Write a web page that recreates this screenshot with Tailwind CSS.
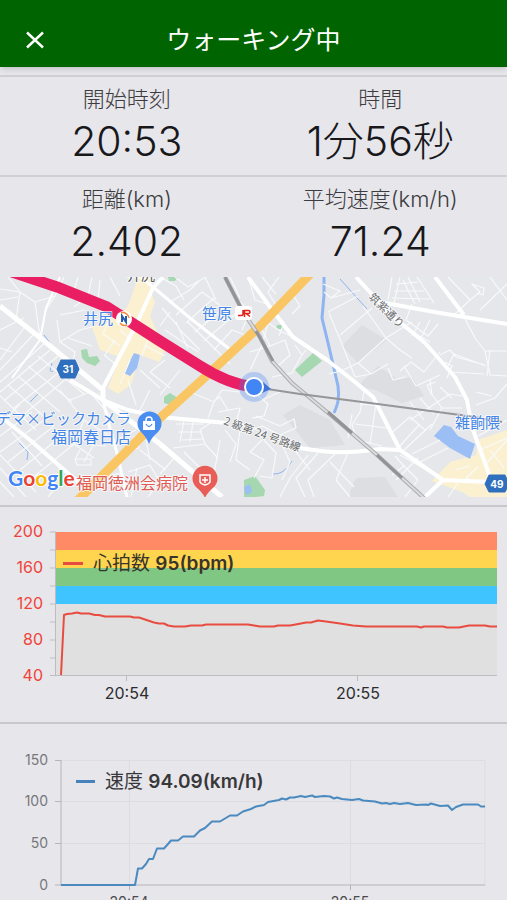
<!DOCTYPE html>
<html lang="ja">
<head>
    <meta charset="UTF-8">
    <meta name="viewport" content="width=device-width, initial-scale=1.0">
    <title>ウォーキング中</title>
    <script src="https://cdn.jsdelivr.net/npm/@tailwindcss/browser@4"></script>
</head>
<body class="bg-[#e7e6eb] text-[#18181b] font-['Inter','Noto_Sans_CJK_JP',sans-serif]">

    <header class="relative grid grid-cols-[70px_1fr_70px] items-center h-[67px] pt-3 bg-[#006500] text-white shadow-md">
        <button type="button" aria-label="閉じる" class="justify-self-center">
            <svg class="w-5 h-5" viewBox="0 0 20 20" fill="none" stroke="currentColor" stroke-width="2.4">
                <path d="M2 2.5L18 17.5M18 2.5L2 17.5" />
            </svg>
        </button>
        <h1 class="text-center text-[25px] leading-8">ウォーキング中</h1>
    </header>

    <main>
        <!-- Stats -->
        <dl class="grid grid-cols-2 mt-2 text-center">
            <div class="h-25 pt-1 border-t-2 border-[#d0cfd4]">
                <dt class="text-[22px] leading-9 text-[#3c3c40] font-light">開始時刻</dt>
                <dd class="text-[41px] leading-12 font-light">20:53</dd>
            </div>
            <div class="h-25 pt-1 border-t-2 border-[#d0cfd4]">
                <dt class="text-[22px] leading-9 text-[#3c3c40] font-light">時間</dt>
                <dd class="text-[41px] leading-12 font-light">1分56秒</dd>
            </div>
            <div class="h-[102px] pt-1 border-t-2 border-[#d0cfd4]">
                <dt class="text-[22px] leading-9 text-[#3c3c40] font-light">距離(km)</dt>
                <dd class="text-[41px] leading-12 font-light">2.402</dd>
            </div>
            <div class="h-[102px] pt-1 border-t-2 border-[#d0cfd4]">
                <dt class="text-[22px] leading-9 text-[#3c3c40] font-light">平均速度(km/h)</dt>
                <dd class="text-[41px] leading-12 font-light">71.24</dd>
            </div>
        </dl>

        <!-- Map -->
        <svg class="block w-full h-[220px]" viewBox="0 277 507 220" preserveAspectRatio="xMidYMid slice" role="img" aria-label="地図">
            <rect x="0" y="277" width="507" height="220" fill="#e5e7ea" />
            <g fill="#dcdee2">
                <path d="M342 346L362 325L387 340L358 363ZM358 386L378 366L397 379L412 377L424 396L402 403L375 390ZM283 415L300 405L330 420L345 445L310 448ZM350 492L356 478L385 477L398 497H350Z" />
            </g>
            <g fill="#fbf1d0">
                <path d="M138 277H153L150 290L155 302L150 316L165 350L160 362L140 355L131 385L118 394L108 388L120 357L100 350L92 327L118 316L128 306Z" />
                <path d="M507 430L478 440L476 455L450 462L432 481L462 492L470 497H507Z" />
                <path d="M110 382H122V389H110Z" />
            </g>
            <g fill="#a5d7b1">
                <path d="M295 370L313 353L322 361L302 377Z" />
                <path d="M81 350L87 349L89 357L97 356L100 361L95 366L87 363L82 358Z" />
                <path d="M168 277H178L175 281H169Z" />
                <path d="M164 397L170 393L178 398L171 405L164 403Z" />
                <path d="M244 480L255 476L265 490L264 496L256 497H244Z" />
                <path d="M277 325L283 325L283 329L276 329Z" />
            </g>
            <g fill="#9bbef5">
                <path d="M134 353L140 355L137 368L130 376L124 373Z" />
                <path d="M434 436L444 425L451 427L458 436L475 444L470 459L450 448Z" />
                <path d="M244 487L250 484L252 492L246 495Z" />
            </g>
            <g fill="none" stroke="#8fb4f2">
                <path d="M324 277V295L322 318L329 347L338 386C340 399 337 406 334 413" stroke-width="3" />
                <path d="M340 279L367 309M44 335L56 351M52 363Q48 374 53 371M30 402L38 394M19 443L28 452L27 460M273 474Q284 475 292 461" stroke-width="1" />
            </g>

            <!-- Minor streets -->
            <g fill="none" stroke="#f8f9fa" stroke-width="1.2" stroke-linejoin="round">
                <path d="M0 289L20 292L35 302L55 296L64 277M20 292L16 320M35 302L40 338M55 296L46 310L40 338M0 330L24 318M8 277L20 292M0 300L18 297M78 277L74 291M92 277L88 296L74 307M100 280L98 300M110 277L120 296M60 315L85 310M57 320L60 342L80 330L92 327M60 342L75 352L72 365M68 338L92 346" />
                <path d="M0 348L12 352M0 360L24 328M0 370L34 334M0 382L44 344M0 392L50 350M5 400L58 356M14 408L62 370M22 416L72 374M0 396L36 430M8 385L48 420M18 376L60 412M28 366L72 402M38 356L84 394M0 424L20 404M0 436L32 412M0 452L44 420M8 462L54 426M20 470L66 432M30 480L74 444M0 468L26 497M0 482L14 497M12 432L42 466" />
                <path d="M60 390L84 420L74 444L94 458M84 420L110 436M70 400L90 392L112 418M0 455L36 492M40 450L66 470M66 432L94 444L84 462M76 459H91V465H77L75 459L80 450M93 445L106 446M48 497L62 480M104 477L120 473M120 438L136 430M124 452L139 448L134 436M128 472L150 465L160 482M140 450L166 470M146 440L150 460M137 468L131 497M160 481L148 497M176 456L160 474M184 452L200 468M173 448L205 444L218 458M205 444L200 430L215 420M220 440L214 474M225 430L236 444L230 462M240 430L236 460L250 470" />
                <path d="M176 424H204M178 432H202M182 440L203 439M184 420L180 442M193 422L190 442M150 390L140 410M128 380L136 405M140 370L160 388M130 360L120 384M104 355L118 366M115 340L105 355M108 322L103 334L120 346M120 330L131 340M144 345L165 356M150 334L142 356M165 360L150 372L170 388M180 370L160 395M190 392L214 402L208 418M214 402L222 390L240 392M218 412L240 408L236 424M214 401L220 397L228 410" />
                <path d="M160 277L176 286L184 300M175 277L188 287L206 277M170 302L190 290L200 280M176 315L202 292L220 305M186 323L214 298M195 332L222 310M204 341L238 312M180 330L200 350M188 322L216 350M162 308L178 326M170 312L160 326M214 350L232 330L248 336M224 362L242 342M213 347L230 364M238 300L250 312L242 330M248 277L255 300L270 305M230 277L240 298M205 277L216 300M165 330L198 352M176 322L188 349" />
                <path d="M262 277L276 294M279 277L268 292L276 305L268 323L262 345L250 370M268 323L282 332L293 337M270 346L285 340L290 355L278 366M250 352L270 346L262 330M295 345L302 355L292 373L272 377M302 355L306 350M277 315L284 323L279 336M290 290L300 306L292 314M256 394L268 404L264 416L252 418M262 400L280 392M256 416L280 426L294 419L296 428L280 435L262 426L250 431" />
                <path d="M323 284L340 291L331 298L324 292M331 298L360 290M328 312L358 296M329 313L342 344L355 377M340 335L372 308M363 306L386 338L412 322M386 338L358 363L341 371L329 374M358 363L371 374L388 364M371 374L355 377M388 368L393 380L406 377M400 371L411 362L424 372L440 352M404 366L416 386L440 375M386 338L400 350L412 358M392 277L388 300M400 277L394 303M408 277L420 302M417 277L434 303M396 284L418 282M394 291L424 291M392 298L430 299M403 280L415 304M412 304L406 320L428 336L438 324M406 328L430 342M420 322L412 336M430 320L420 340" />
                <path d="M448 277L470 300L480 292L472 284L484 288L483 295L477 293M470 300L455 314M490 277L507 300M507 284L480 310M463 315L475 338L485 351H507M485 351L490 375L507 376M440 355L450 350L456 357L485 365M448 366L454 354L486 366M450 372L484 374M445 362L452 366L447 378M490 350L487 376" />
                <path d="M364 392L360 412L352 425L357 440L382 446M360 404L380 406M355 424L387 428M352 414L348 438M376 404L370 444M390 434L410 417L425 430M398 448L420 424M404 450L432 424M412 454L440 440M420 462L448 448M410 420L450 394L462 396M430 430L442 408L462 408M420 398L434 414M410 402L424 420M430 392L442 408M440 387L452 398M476 405L495 398L507 384M476 392L492 396M470 420L490 416M478 436L507 420M480 450L507 438" />
                <path d="M430 380L432 395L427 385L436 382M486 464L507 440M490 450L504 468M478 467L466 478L475 482M448 497L458 483M455 470L470 466M395 456L404 466L392 475M404 466L418 480L405 497M400 455L430 472M418 458L396 480M348 453L336 480L350 497M335 454L308 480L314 497M318 453L296 478L305 497M330 462L354 487M296 452L310 470M308 455L290 478L280 497M262 440L250 452L264 460L254 478M264 440L276 453L272 478L260 476M280 440L290 462L282 480" />
            </g>

            <!-- Main roads -->
            <g fill="none" stroke="#fff" stroke-linejoin="round">
                <path d="M0 306L43 340L103 390V400L160 444L222 497" stroke-width="5" />
                <path d="M163 277L153 288L136 325L102 390" stroke-width="4" />
                <path d="M141 277L153 287L190 318L232 351" stroke-width="3" />
                <path d="M70 380L103 400L128 410L160 417L227 423M300 448C335 454 350 453 380 449L400 450L443 480L490 482H507M443 480L425 497" stroke-width="4" />
                <path d="M103 400L109 425L117 453L127 497" stroke-width="3" />
                <path d="M0 416L30 440L78 482" stroke-width="4" />
                <path d="M356 277L390 314L425 343L455 377L467 400L472 427L490 477" stroke-width="4" />
                <path d="M380 302L440 313L507 324M435 277L464 315" stroke-width="4" />
                <path d="M248 277L270 307L293 337L327 360L355 382L373 397L400 450" stroke-width="4" />
                <path d="M60 277L46 308L40 340L12 378" stroke-width="2" />
            </g>
            <path d="M312 272L260 326L203 379L160 418L117 461L76 502" fill="none" stroke="#fac663" stroke-width="9" />

            <!-- Railways -->
            <g fill="none">
                <path d="M225 277L243 312L260 337L272 361L292 383L333 417L377 455L424 498" stroke="#aaabad" stroke-width="4" />
                <path d="M225 277L243 312L260 337L272 361L292 383L333 417L377 455L424 498" stroke="#dcdcde" stroke-width="2" />
                <path d="M225 277L242 310M256 331L273 361M328 412L352 433M377 455L402 478" stroke="#929396" stroke-width="3" />
                <path d="M254 387L300 394L370 403L468 416L502 422" stroke="#969698" stroke-width="2" />
            </g>

            <!-- Walked route -->
            <path d="M0 268L57 287L107 307L160 341L200 366Q228 384 254 387" fill="none" stroke="#e91e63" stroke-width="11" />
            <circle cx="254" cy="387" r="15" fill="#4285f4" fill-opacity="0.3" />
            <path d="M263 382L271 389L262 393Z" fill="#3f73d8" />
            <circle cx="254" cy="387" r="9" fill="#4285f4" stroke="#fff" stroke-width="2" />

            <!-- Stations -->
            <circle cx="124" cy="319" r="8" fill="#fff" />
            <path d="M122 322V316L126 322V316" fill="none" stroke="#245bab" stroke-width="2" />
            <path d="M121 313A6 6 0 0 1 129 318M127 325A6 6 0 0 1 120 323" fill="none" stroke="#ef8b3a" stroke-width="1.5" />
            <rect x="235" y="306" width="17" height="14" rx="3" fill="#fff" />
            <path d="M243 310V314Q243 315.500 241.500 315.500H238M244.500 317V310.500H248.500Q250 310.500 250 312Q250 313.500 248.500 313.500H246L250 316.500" fill="none" stroke="#e0211b" stroke-width="1.5" />

            <!-- Route shields -->
            <g fill="#2f6fbd">
                <path d="M61 360H75L79 369L75 378H61L57 369Z" stroke="#2f6fbd" stroke-width="1" stroke-linejoin="round" />
                <path d="M489 475H505L509 484L505 492H489L485 484Z" stroke="#2f6fbd" stroke-width="1" stroke-linejoin="round" />
            </g>
            <g fill="#fff" font-family="Inter, sans-serif" font-size="10" font-weight="700" text-anchor="middle">
                <text x="68" y="373">31</text>
                <text x="497" y="488">49</text>
            </g>

            <!-- Place pins -->
            <path d="M149 444Q147 438 141 432A12 12 0 1 1 158 432Q151 438 149 444Z" fill="#4a8df0" />
            <path d="M143 421H155V430H143Z" fill="#fff" />
            <path d="M146 421V420A3 3 0 0 1 152 420V421" fill="none" stroke="#fff" stroke-width="1.500" />
            <path d="M146 424Q149 429 152 424" fill="none" stroke="#4a8df0" stroke-width="1.3" />
            <path d="M205 498Q203 493 196 487A12.500 12.500 0 1 1 214 487Q207 493 205 498Z" fill="#e85d55" />
            <path d="M200 475H210V482Q209 484 205 485Q201 484 200 482ZM205 477V483M202 480H208" fill="none" stroke="#fff" stroke-width="1.5" />

            <!-- Map labels -->
            <g font-family="'Noto Sans CJK JP', sans-serif" font-size="15" stroke="#fff" stroke-opacity="0.7" stroke-width="2" stroke-linejoin="round" paint-order="stroke">
                <text x="127" y="280" font-size="14" fill="#55585c">井尻</text>
                <text x="83" y="324" fill="#4585e6">井尻</text>
                <text x="202" y="319" fill="#4585e6">笹原</text>
                <text x="455" y="428" fill="#4585e6">雑餉隈</text>
                <text x="131" y="424" text-anchor="end" fill="#4585e6">デマ×ビックカメラ</text>
                <text x="131" y="443" font-size="16" text-anchor="end" fill="#4585e6">福岡春日店</text>
                <text x="76" y="489" font-size="16" fill="#e05a52">福岡徳洲会病院</text>
                <text x="0" y="0" transform="translate(368 298) rotate(44)" font-size="11" fill="#696b6e">筑紫通り</text>
                <text x="0" y="0" transform="translate(223 424) rotate(20)" font-size="11" fill="#696b6e">2 級第 24 号路線</text>
            </g>
            <text x="8" y="486" font-family="Lato, sans-serif" font-size="21" font-weight="700" stroke="#fff" stroke-width="2" paint-order="stroke"><tspan fill="#4285f4">G</tspan><tspan fill="#ea4335">o</tspan><tspan fill="#fbbc05">o</tspan><tspan fill="#4285f4">g</tspan><tspan fill="#34a853">l</tspan><tspan fill="#ea4335">e</tspan></text>
        </svg>

        <!-- Heart rate -->
        <section class="mt-2 border-t-2 border-[#c8c7cc]">
            <svg class="block w-full h-auto" viewBox="0 507 507 215" role="img" aria-label="心拍数" font-family="Inter, 'Noto Sans CJK JP', sans-serif">
                <rect x="56" y="532" width="441" height="18" fill="#ff8a65" />
                <rect x="56" y="550" width="441" height="18" fill="#ffd54f" />
                <rect x="56" y="568" width="441" height="18" fill="#81c784" />
                <rect x="56" y="586" width="441" height="18" fill="#40c4ff" />
                <rect x="56" y="604" width="441" height="72" fill="#e0e0e0" />
                <path d="M55.500 532V676M50 532H56M50 550H56M50 568H56M50 586H56M50 604H56M50 622H56M50 640H56M50 658H56M50 675.500H497M126.500 676V681M357.500 676V681" fill="none" stroke="#bdbdc0" />
                <g fill="#f0433a" font-size="16" text-anchor="end">
                    <text x="43" y="537">200</text>
                    <text x="43" y="573">160</text>
                    <text x="43" y="609">120</text>
                    <text x="43" y="645">80</text>
                    <text x="43" y="681">40</text>
                </g>
                <g fill="#2c2c2e" font-size="16" text-anchor="middle">
                    <text x="127" y="699">20:54</text>
                    <text x="358" y="699">20:55</text>
                </g>
                <path d="M61 675L64 615L67 614L72 613.500L77 612.500L81 613.500H89L95 615H99L105 616.500H130L134 617.500H139L145 619.500L154 622.500L159 623.500H164L168 625.500L174 626.500H185L191 625.500H202L206 624.500H248L254 625.500L260 626.500H274L278 625.500H290L301 623.500L306 622.500L311 622.500L318 620.500L326 621.500L340 623.500L353 625.500L366 626.500H417L421 627.500L424 626.500H443L447 627.500H459L469 625.500H485L490 626.500H497" fill="none" stroke="#e84c40" stroke-width="2" stroke-linejoin="round" />
                <path d="M63 563.500H83" stroke="#e84c40" stroke-width="3" />
                <text x="93" y="570" font-size="19" fill="#38352c">心拍数 <tspan font-weight="600">95(bpm)</tspan></text>
            </svg>
        </section>

        <!-- Speed -->
        <section class="border-t-2 border-[#c8c7cc]">
            <svg class="block w-full h-auto" viewBox="0 724 507 191" role="img" aria-label="速度" font-family="Inter, 'Noto Sans CJK JP', sans-serif">
                <path d="M61 760.500H485M61 801.500H485M61 843.500H485M129.500 760V885M350.500 760V885M485 760V885" fill="none" stroke="#dddce0" />
                <path d="M61 760V885M55 760.500H61M55 801.500H61M55 843.500H61M55 885H485M129.500 885V890M350.500 885V890" fill="none" stroke="#b5b5b9" />
                <g fill="#77777b" font-size="14" text-anchor="end">
                    <text x="48" y="765">150</text>
                    <text x="48" y="806">100</text>
                    <text x="48" y="848">50</text>
                    <text x="48" y="890">0</text>
                </g>
                <g fill="#4a4a4d" font-size="14" text-anchor="middle">
                    <text x="129" y="907">20:54</text>
                    <text x="350" y="907">20:55</text>
                </g>
                <path d="M61 885H135L138 868.500H142L146 864L149 859H153L157 848.500H164L168 844L171 840.500H178L183 836.500H194L200 830.500L205 828L212 821.500H220L230 815.500H237L243 811.500L251 809L256 806.500L264 805L268 802L279 800L282 798.500L286 799.500L290 797.500H294L301 796L305 797L312 795.500L315 797L324 796L330 796.500L334 798.500L337 797.500L342 799L352 800L359 799L363 800.500L375 801.500L382 803.500L386 803L390 804L394 803L400 804L408 803L416 805L426 804.500L428 805L431 803.500L440 806L448 805.500L452 810L456 807L463 804.500H478L481 806.500H485" fill="none" stroke="#4a8abf" stroke-width="2" stroke-linejoin="round" />
                <path d="M76 781.500H95" stroke="#4682bb" stroke-width="3" />
                <text x="105" y="788" font-size="19" fill="#38383b">速度 <tspan font-weight="600">94.09(km/h)</tspan></text>
            </svg>
        </section>
    </main>
</body>
</html>
